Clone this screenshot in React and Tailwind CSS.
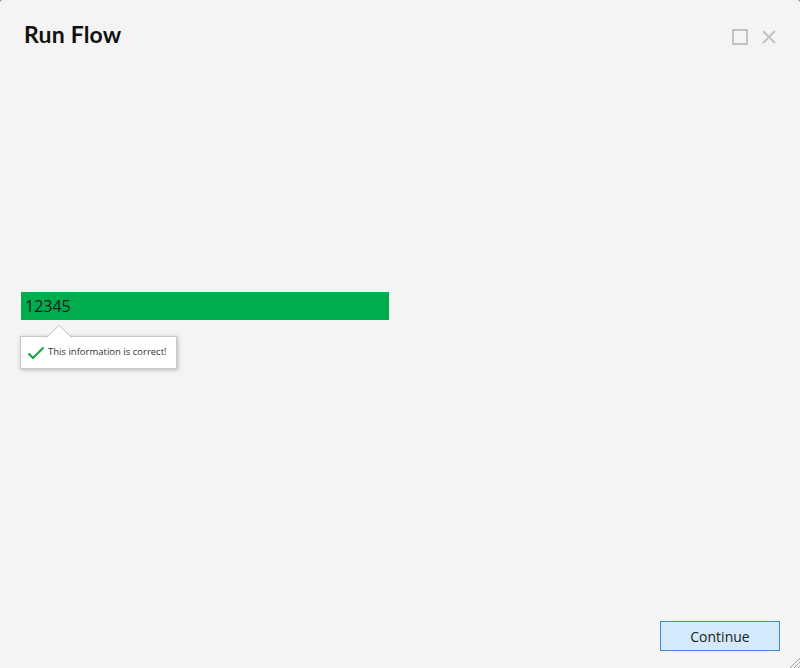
import React from "react";

const App = () => {
  return (
    <div className="w-[800px] h-[668px] bg-[#8a8a8a] overflow-hidden">
      <div
        className="relative w-full h-full bg-[#f4f4f4] rounded-t-[3px] flex flex-col"
        style={{ fontFamily: "'Lato', 'Open Sans', sans-serif" }}
      >
        {/* header */}
        <div className="flex items-start justify-between pl-6 pr-6 pt-[20px]">
          <h1 className="text-[23px] leading-[28px] font-bold text-[#111] tracking-[0.2px]">Run Flow</h1>
          <div className="flex items-center gap-[14px] pt-[9px]">
            <svg width="16" height="16" viewBox="0 0 16 16" fill="none">
              <rect x="1" y="1" width="14" height="14" stroke="#c2c2c2" strokeWidth="2" />
            </svg>
            <svg width="14" height="14" viewBox="0 0 14 14" fill="none">
              <path d="M1 1L13 13M13 1L1 13" stroke="#c2c2c2" strokeWidth="1.8" />
            </svg>
          </div>
        </div>

        {/* body */}
        <div className="flex-1 pl-[21px] pt-[244px]">
          <div className="w-[368px] h-[28px] bg-[#00ad4e] flex items-center pl-[4px] text-[16px] text-[#1a1a1a] font-['Open_Sans',sans-serif]">
            12345
          </div>
          <div className="relative mt-[16px] -ml-[1px] w-[157px] h-[33px] bg-white border border-[#c8c8c8] shadow-[1px_1px_4px_rgba(0,0,0,0.25)] flex items-center pl-[6px] gap-[3px]">
            <svg
              className="absolute -top-[12px] left-[25px]"
              width="26"
              height="13"
              viewBox="0 0 26 13"
            >
              <path d="M0 13L13 0.5L26 13Z" fill="#fff" />
              <path d="M0 12.5L13 0.5L26 12.5" fill="none" stroke="#c0c0c0" strokeWidth="1" />
            </svg>
            <svg width="18" height="14" viewBox="0 0 18 14" fill="none">
              <path d="M1.5 7.5L6 12L16.5 1.5" stroke="#14a23a" strokeWidth="2" />
            </svg>
            <span className="text-[9.5px] text-[#333] font-['Open_Sans',sans-serif]">
              This information is correct!
            </span>
          </div>
        </div>

        {/* footer */}
        <div className="flex justify-end pr-[20px] pb-[17px]">
          <button className="w-[120px] h-[30px] bg-[#d2eafc] border border-[#3b87d3] text-[14px] text-[#222] font-['Open_Sans',sans-serif]">
            Continue
          </button>
        </div>

        <svg className="absolute right-0 bottom-0" width="12" height="12" viewBox="0 0 12 12">
          <path d="M12 2L2 12M12 6L6 12M12 10L10 12" stroke="#a0a0a0" strokeWidth="1" />
        </svg>
      </div>
    </div>
  );
};

export default App;
